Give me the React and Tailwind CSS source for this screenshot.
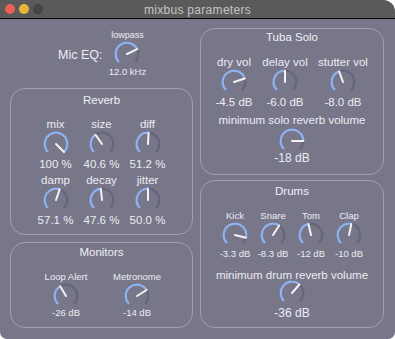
import React from 'react'

const FONT = { fontFamily: '"Liberation Sans", Arial, sans-serif' }

// angle: needle direction in degrees, 0 = straight up, range -135..135
function Knob({ angle }) {
  const c = 13
  const r = 11.3
  const start = -135
  const end = 135
  const pt = (a, rad = r) => {
    const t = (a * Math.PI) / 180
    return [c + rad * Math.sin(t), c - rad * Math.cos(t)]
  }
  const arc = (a0, a1) => {
    const [x0, y0] = pt(a0)
    const [x1, y1] = pt(a1)
    const large = a1 - a0 > 180 ? 1 : 0
    return `M ${x0} ${y0} A ${r} ${r} 0 ${large} 1 ${x1} ${y1}`
  }
  const [nx, ny] = pt(angle, 11.3)
  return (
    <svg width="26" height="26" viewBox="0 0 26 26" className="block shrink-0">
      <path d={arc(start, end)} fill="none" stroke="#66667a" strokeWidth="2.3" />
      {angle > start && (
        <path d={arc(start, angle)} fill="none" stroke="#8fb2ee" strokeWidth="2.3" />
      )}
      <line x1={c} y1={c} x2={nx} y2={ny} stroke="#f2f2f2" strokeWidth="2" strokeLinecap="round" />
    </svg>
  )
}

function Dial({ label, value, angle, small, width, valueClass = '' }) {
  const text = small ? 'text-[9.5px] leading-[12px]' : 'text-[11.5px] leading-[14px]'
  return (
    <div className="flex flex-col items-center shrink-0" style={{ width }}>
      <span className={`${text} text-[#ececf2] whitespace-nowrap`}>{label}</span>
      <Knob angle={angle} />
      <span className={`${text} text-[#ececf2] whitespace-nowrap ${valueClass}`}>{value}</span>
    </div>
  )
}

function Panel({ title, className = '', children }) {
  return (
    <div className={`rounded-[15px] border border-[#a09fb3] flex flex-col items-stretch ${className}`}>
      <div className="text-center text-[11.5px] leading-[14px] text-[#f0f0f4]">{title}</div>
      {children}
    </div>
  )
}

export default function App() {
  return (
    <div className="w-[395px] h-[339px] bg-white" style={FONT}>
      <div className="w-full h-full bg-[#78778a] rounded-tr-[12px] rounded-b-[7px] overflow-hidden flex flex-col">
        {/* Title bar */}
        <div className="h-[19px] shrink-0 bg-[#5a5a5a] border-b border-black flex items-center relative">
          <div className="flex items-center gap-[4px] pl-[5px]">
            <span className="w-[10px] h-[10px] rounded-full bg-[#ec5f57]" />
            <span className="w-[10px] h-[10px] rounded-full bg-[#e8b73a]" />
            <span className="w-[10px] h-[10px] rounded-full bg-[#474747] border border-[#3e3e3e]" />
          </div>
          <div className="absolute inset-0 flex items-center justify-center text-[12px] text-[#c4c4c4] tracking-[0.3px] pt-[1px]">
            mixbus parameters
          </div>
        </div>

        {/* Body */}
        <div className="flex-1 flex px-[10px] gap-[7px]">
          {/* Left column */}
          <div className="w-[183px] flex flex-col">
            <div className="h-[69px] flex items-start pl-[48px]">
              <span className="text-[12.5px] leading-[14px] text-[#ececf2] mt-[29px]">Mic EQ:</span>
              <div className="flex flex-col items-center w-[44px] ml-[3px] pt-[11px]">
                <span className="text-[9px] leading-[11px] text-[#ececf2]">lowpass</span>
                <Knob angle={64} />
                <span className="text-[9.5px] leading-[11px] text-[#ececf2] -mt-[1px]">12.0 kHz</span>
              </div>
            </div>

            <Panel title="Reverb" className="h-[147px] pt-[4px]">
              <div className="flex flex-col gap-[2px] mt-[10px]">
                <div className="flex justify-center gap-0">
                  <Dial label="mix" value="100 %" angle={135} width={46} />
                  <Dial label="size" value="40.6 %" angle={-35} width={46} />
                  <Dial label="diff" value="51.2 %" angle={3} width={46} />
                </div>
                <div className="flex justify-center gap-0">
                  <Dial label="damp" value="57.1 %" angle={19} width={46} />
                  <Dial label="decay" value="47.6 %" angle={-6} width={46} />
                  <Dial label="jitter" value="50.0 %" angle={0} width={46} />
                </div>
              </div>
            </Panel>

            <Panel title="Monitors" className="h-[86px] mt-[7px] pt-[2px]">
              <div className="flex mt-[12px] pl-[25px] gap-[11px]">
                <Dial small label="Loop Alert" value="-26 dB" angle={-31} width={60} valueClass="-mt-[2px]" />
                <Dial small label="Metronome" value="-14 dB" angle={58} width={60} valueClass="-mt-[2px]" />
              </div>
            </Panel>
          </div>

          {/* Right column */}
          <div className="w-[184px] flex flex-col pt-[9px]">
            <Panel title="Tuba Solo" className="h-[147px] pt-[1px]">
              <div className="flex mt-[11px] pl-[8px] gap-[1px]">
                <Dial label="dry vol" value="-4.5 dB" angle={72} width={50} />
                <Dial label="delay vol" value="-6.0 dB" angle={0} width={50} />
                <Dial label="stutter vol" value="-8.0 dB" angle={-20} width={64} />
              </div>
              <div className="flex flex-col items-center mt-[4px]">
                <span className="text-[11.5px] leading-[14px] text-[#ececf2] whitespace-nowrap">
                  minimum solo reverb volume
                </span>
                <div className="mt-[1px]">
                  <Knob angle={90} />
                </div>
                <span className="text-[12px] leading-[14px] text-[#ececf2] -mt-[3px]">-18 dB</span>
              </div>
            </Panel>

            <Panel title="Drums" className="h-[148px] mt-[5px] pt-[3px]">
              <div className="flex mt-[12px] pl-[15px]">
                <Dial small label="Kick" value="-3.3 dB" angle={104} width={38} />
                <Dial small label="Snare" value="-8.3 dB" angle={33} width={38} />
                <Dial small label="Tom" value="-12 dB" angle={-13} width={38} />
                <Dial small label="Clap" value="-10 dB" angle={12} width={38} />
              </div>
              <div className="flex flex-col items-center mt-[8px]">
                <span className="text-[11.5px] leading-[14px] text-[#ececf2] whitespace-nowrap">
                  minimum drum reverb volume
                </span>
                <div className="-mt-[2px]">
                  <Knob angle={41} />
                </div>
                <span className="text-[12px] leading-[14px] text-[#ececf2]">-36 dB</span>
              </div>
            </Panel>
          </div>
        </div>
      </div>
    </div>
  )
}
